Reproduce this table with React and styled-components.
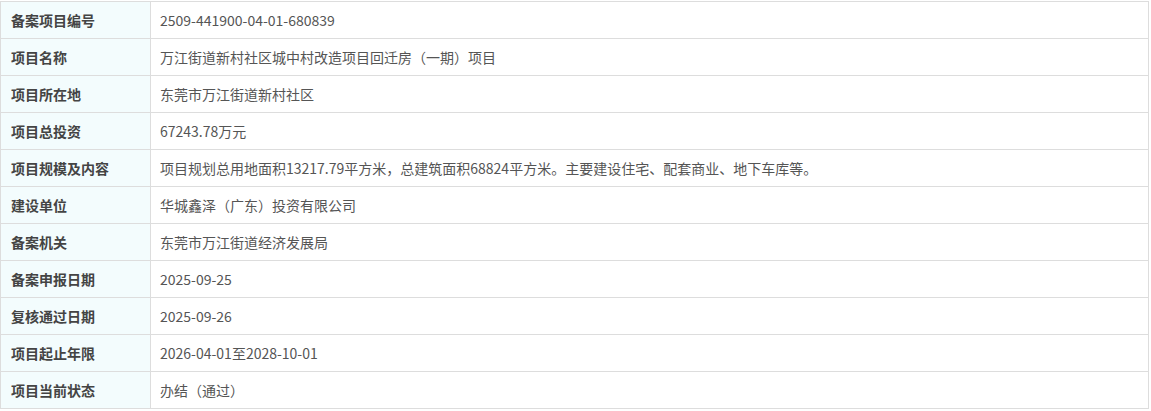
import React from 'react';
import styled, { createGlobalStyle } from 'styled-components';

const GlobalStyle = createGlobalStyle`
  body {
    margin: 0;
    background: #fff;
    font-family: "Microsoft YaHei", "Noto Sans CJK SC", "Liberation Sans", sans-serif;
  }
`;

const Wrapper = styled.div`
  padding-top: 1px;
  width: 1149px;
`;

const Table = styled.table`
  width: 100%;
  border-collapse: collapse;
  table-layout: fixed;
  font-size: 14px;
`;

const Row = styled.tr`
  height: 37px;
`;

const Label = styled.th`
  width: 150px;
  box-sizing: border-box;
  padding: 0 0 0 10px;
  text-align: left;
  font-weight: bold;
  color: #444;
  background-color: #f3fcfd;
  border: 1px solid #dddddd;
  white-space: nowrap;
`;

const Value = styled.td`
  padding: 0 0 0 9px;
  color: #555;
  border: 1px solid #dddddd;
`;

const rows = [
  ['备案项目编号', '2509-441900-04-01-680839'],
  ['项目名称', '万江街道新村社区城中村改造项目回迁房（一期）项目'],
  ['项目所在地', '东莞市万江街道新村社区'],
  ['项目总投资', '67243.78万元'],
  ['项目规模及内容', '项目规划总用地面积13217.79平方米，总建筑面积68824平方米。主要建设住宅、配套商业、地下车库等。'],
  ['建设单位', '华城鑫泽（广东）投资有限公司'],
  ['备案机关', '东莞市万江街道经济发展局'],
  ['备案申报日期', '2025-09-25'],
  ['复核通过日期', '2025-09-26'],
  ['项目起止年限', '2026-04-01至2028-10-01'],
  ['项目当前状态', '办结（通过）'],
];

export default function App() {
  return (
    <Wrapper>
      <GlobalStyle />
      <Table>
        <tbody>
          {rows.map(([label, value]) => (
            <Row key={label}>
              <Label>{label}</Label>
              <Value>{value}</Value>
            </Row>
          ))}
        </tbody>
      </Table>
    </Wrapper>
  );
}
